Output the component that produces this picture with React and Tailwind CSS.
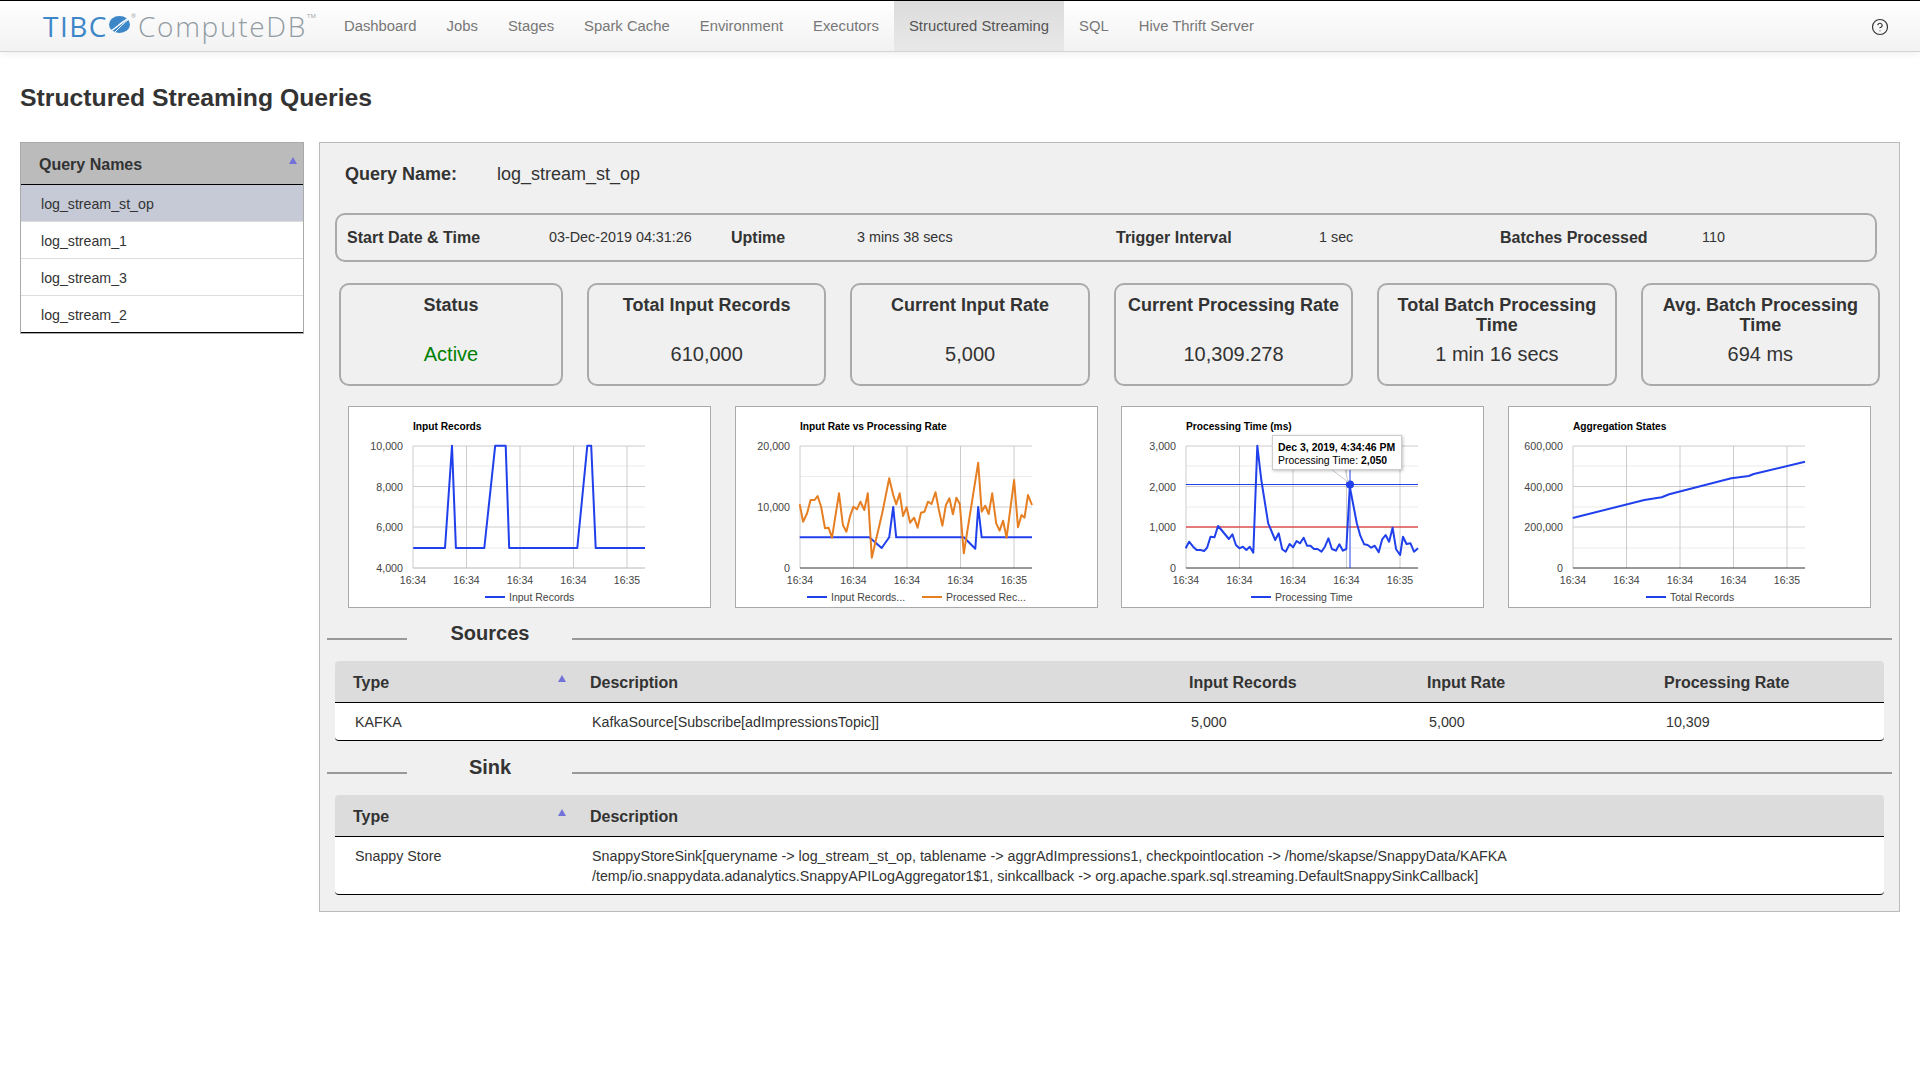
import { CircleHelp } from "lucide-react";

const navItems = ["Dashboard", "Jobs", "Stages", "Spark Cache", "Environment", "Executors", "Structured Streaming", "SQL", "Hive Thrift Server"];
const queries = ["log_stream_st_op", "log_stream_1", "log_stream_3", "log_stream_2"];

const stats = [
  { title: "Status", value: "Active", active: true },
  { title: "Total Input Records", value: "610,000" },
  { title: "Current Input Rate", value: "5,000" },
  { title: "Current Processing Rate", value: "10,309.278" },
  { title: "Total Batch Processing Time", value: "1 min 16 secs" },
  { title: "Avg. Batch Processing Time", value: "694 ms" },
];

// traces are measured off the reference, plot box runs x 65-297, y 40-162
const toPoints = (raw, left) =>
  raw.map(([x, y]) => `${((x - left) / 2.0103).toFixed(1)},${(y / 3 - 16).toFixed(1)}`).join(" ");

const BLUE = "#2040ec";
const ORANGE = "#e67e22";

const charts = [
  {
    title: "Input Records",
    major: [["10,000", 40], ["8,000", 80.5], ["6,000", 121], ["4,000", 162]],
    minor: [60, 101, 142],
    axis: "#b8b8b8",
    lines: [{ color: BLUE, data: toPoints([[168, 474], [232, 474], [246, 167], [254, 474], [311, 474], [333, 167], [354, 167], [361, 474], [498, 474], [518, 167], [526, 167], [535, 474], [634, 474]], 37) }],
    legend: [{ x: 137, label: "Input Records" }],
  },
  {
    title: "Input Rate vs Processing Rate",
    major: [["20,000", 40], ["10,000", 101], ["0", 162]],
    minor: [70.5, 131.5],
    axis: "#333",
    lines: [
      { color: BLUE, data: toPoints([[945, 442], [1085, 442], [1110, 474], [1125, 442], [1133, 351], [1139, 442], [1275, 442], [1298, 476], [1304, 351], [1311, 442], [1412, 442]], 815) },
      { color: ORANGE, data: toPoints([[945, 343], [952, 395], [960, 370], [967, 330], [975, 330], [981, 318], [988, 350], [996, 415], [1003, 413], [1010, 443], [1024, 310], [1032, 405], [1039, 425], [1046, 380], [1053, 350], [1060, 358], [1067, 335], [1075, 360], [1082, 310], [1090, 503], [1111, 370], [1125, 265], [1133, 315], [1139, 343], [1146, 310], [1153, 378], [1160, 352], [1167, 398], [1175, 383], [1182, 413], [1189, 368], [1196, 365], [1203, 335], [1210, 342], [1218, 307], [1225, 360], [1232, 407], [1239, 345], [1246, 325], [1253, 373], [1260, 323], [1267, 342], [1275, 490], [1304, 218], [1311, 365], [1318, 347], [1325, 372], [1332, 310], [1340, 400], [1347, 422], [1354, 392], [1361, 443], [1376, 270], [1384, 412], [1391, 375], [1397, 383], [1404, 315], [1412, 345]], 815) },
    ],
    legend: [
      { x: 72, label: "Input Records..." },
      { x: 187, label: "Processed Rec...", color: ORANGE },
    ],
  },
  {
    title: "Processing Time (ms)",
    major: [["3,000", 40], ["2,000", 80.5], ["1,000", 121], ["0", 162]],
    minor: [60, 101, 142],
    axis: "#333",
    lines: [{ color: BLUE, data: toPoints([[153, 475], [160, 455], [168, 470], [175, 480], [183, 480], [190, 483], [196, 473], [203, 440], [211, 442], [218, 408], [225, 420], [240, 447], [247, 433], [254, 465], [261, 475], [268, 470], [275, 480], [282, 470], [289, 488], [297, 167], [305, 270], [319, 400], [333, 450], [340, 430], [347, 478], [354, 485], [362, 462], [369, 472], [376, 453], [383, 460], [390, 443], [397, 467], [404, 467], [411, 477], [418, 477], [426, 485], [433, 470], [440, 445], [447, 477], [455, 482], [462, 463], [469, 482], [476, 477], [483, 290], [497, 400], [504, 437], [512, 463], [519, 465], [526, 473], [533, 467], [541, 487], [548, 448], [555, 435], [562, 455], [569, 413], [576, 478], [584, 495], [590, 440], [597, 462], [605, 460], [612, 485], [620, 475]], 23) }],
    legend: [{ x: 130, label: "Processing Time" }],
    hover: true,
  },
  {
    title: "Aggregation States",
    major: [["600,000", 40], ["400,000", 80.5], ["200,000", 121], ["0", 162]],
    minor: [60, 101, 142],
    axis: "#333",
    lines: [{ color: BLUE, data: toPoints([[931, 384], [1075, 330], [1110, 322], [1125, 313], [1250, 265], [1285, 258], [1295, 252], [1398, 215]], 801) }],
    legend: [{ x: 138, label: "Total Records" }],
  },
];

const xTicks = [65, 118.5, 172, 225.5, 279];

function Chart({ title, major, minor, axis, lines, legend, hover }) {
  return (
    <div className="relative w-[363px] h-[202px] shrink-0 bg-white border border-[#aaa]">
      <svg width="361" height="200" viewBox="1 1 361 200" className="block">
        <text x="65" y="24" fontSize="10.2" fontWeight="700" fill="#000">{title}</text>
        {minor.map((y) => (
          <line key={y} x1="65" x2="297" y1={y} y2={y} stroke="#ebebeb" />
        ))}
        {xTicks.map((x) => (
          <line key={x} x1={x} x2={x} y1="40" y2="162" stroke="#ccc" />
        ))}
        {major.map(([label, y]) => (
          <g key={label}>
            <line x1="65" x2="297" y1={y} y2={y} stroke={y === 162 ? axis : "#ccc"} />
            <text x="55" y={y + 4} fontSize="10.7" textAnchor="end" fill="#444">{label}</text>
          </g>
        ))}
        {xTicks.map((x) => (
          <text key={x} x={x} y="178" fontSize="10.5" textAnchor="middle" fill="#444">{x === 279 ? "16:35" : "16:34"}</text>
        ))}
        {hover && (
          <g>
            <line x1="65" x2="297" y1="78.5" y2="78.5" stroke={BLUE} />
            <line x1="65" x2="297" y1="121" y2="121" stroke="#e01010" />
            <line x1="229" x2="229" y1="62" y2="162" stroke={BLUE} />
          </g>
        )}
        {lines.map((l) => (
          <polyline key={l.color} points={l.data} fill="none" stroke={l.color} strokeWidth="2" strokeLinejoin="round" />
        ))}
        {hover && (
          <g>
            <circle cx="229" cy="78.5" r="4" fill={BLUE} />
            <polygon points="210,63 224,63 227,76" fill="#fff" stroke="#ccc" />
          </g>
        )}
        {legend.map((item) => (
          <g key={item.label}>
            <line x1={item.x} x2={item.x + 20} y1="191" y2="191" stroke={item.color || BLUE} strokeWidth="2" />
            <text x={item.x + 24} y="195" fontSize="10.5" fill="#444">{item.label}</text>
          </g>
        ))}
      </svg>
      {hover && (
        <div className="absolute left-[150px] top-[28px] w-[130px] h-[35px] pl-[5px] pt-[5px] bg-white border border-[#ccc] shadow-[1px_1px_3px_rgba(0,0,0,0.25)] text-[10.45px] leading-[13px] text-black whitespace-nowrap">
          <div className="font-bold">Dec 3, 2019, 4:34:46 PM</div>
          <div>Processing Time: <span className="font-bold">2,050</span></div>
        </div>
      )}
    </div>
  );
}

function SortArrow({ className }) {
  return (
    <svg width="8" height="7" viewBox="0 0 8 7" className={className}>
      <polygon points="4,0 8,7 0,7" fill="#7272d8" />
    </svg>
  );
}

function SectionTitle({ children, className }) {
  return (
    <div className={`flex items-start ml-[7px] w-[1565px] h-[24px] ${className}`}>
      <div className="w-[80px] h-[2px] mt-[17px] bg-[#999]" />
      <div className="w-[165px] pl-[1px] text-center text-[20px] leading-[24px] font-bold">{children}</div>
      <div className="flex-1 h-[2px] mt-[17px] bg-[#999]" />
    </div>
  );
}

function Logo() {
  return (
    <div className="flex items-start w-[329px] pl-[43px] h-full select-none font-['Open_Sans',sans-serif]">
      <span className="text-[#3d86c8] text-[28px] leading-[50px] tracking-[1.5px]">TIBC</span>
      <svg width="24" height="20" viewBox="0 0 24 20" className="mt-[14px] shrink-0">
        <ellipse cx="11.5" cy="9.5" rx="10.5" ry="8.5" fill="#3d86c8" />
        <path d="M3 16 C 9 12, 14 7, 21 3" stroke="#fff" strokeWidth="1.5" fill="none" />
        <path d="M7 17 C 11 13, 16 8, 21 4" stroke="#fff" strokeWidth="1" fill="none" />
      </svg>
      <span className="text-[#9aa4ab] text-[6px] leading-[6px] mt-[12px] -ml-[1px]">®</span>
      <span className="text-[#929ca3] text-[28px] leading-[50px] ml-[2px] font-light tracking-[1.7px]">ComputeDB</span>
      <span className="text-[#9aa4ab] text-[6px] leading-[6px] mt-[12px]">TM</span>
    </div>
  );
}

export default function App() {
  return (
    <div className="w-[1920px] h-[1080px] bg-white text-[#333] font-['Liberation_Sans',Arial,sans-serif] overflow-hidden">
      <nav className="flex h-[52px] border-t border-black border-b border-b-[#d4d4d4] bg-gradient-to-b from-white to-[#f2f2f2] shadow-[0_1px_8px_rgba(0,0,0,0.08)]">
        <Logo />
        {navItems.map((item) => (
          <a
            key={item}
            className={`px-[15px] text-[14.83px] leading-[50px] ${item === "Structured Streaming" ? "bg-gradient-to-b from-[#dcdcdc] to-[#e8e8e8] text-[#555]" : "text-[#777]"}`}
          >
            {item}
          </a>
        ))}
        <div className="ml-auto pr-[31px] pt-[17px]">
          <CircleHelp size={18} strokeWidth={1.6} color="#333" />
        </div>
      </nav>

      <h1 className="ml-5 mt-[33px] text-[24.75px] leading-[26px] font-bold">Structured Streaming Queries</h1>

      <main className="flex items-start mt-[31px] ml-5">
        <aside className="w-[284px] border border-[#aaa] bg-white">
          <div className="relative h-[42px] pl-[18px] bg-[#bbb] border-b border-black text-[16px] leading-[43px] font-bold">
            Query Names
            <SortArrow className="absolute right-[6px] top-[14px]" />
          </div>
          {queries.map((q, i) => (
            <div
              key={q}
              className={`h-[37px] pl-[20px] text-[14.2px] leading-[38px] border-b ${i === 0 ? "bg-[#c5cad6]" : ""} ${i === queries.length - 1 ? "border-black" : "border-[#ddd]"}`}
            >
              {q}
            </div>
          ))}
        </aside>

        <section className="ml-[15px] w-[1581px] h-[770px] bg-[#f0f0f0] border border-[#bbb]">
          <div className="flex items-center h-[22px] mt-[20px] ml-[25px] text-[18px]">
            <span className="w-[152px] font-bold">Query Name:</span>
            <span>log_stream_st_op</span>
          </div>

          <div className="grid grid-cols-[384px_385px_384px_1fr] items-center ml-[15px] mt-[28px] w-[1542px] h-[49px] pl-[10px] border-2 border-[#aaa] rounded-[10px] text-[14.35px]">
            <div className="flex items-center"><span className="w-[202px] text-[16px] font-bold">Start Date &amp; Time</span>03-Dec-2019 04:31:26</div>
            <div className="flex items-center"><span className="w-[126px] text-[16px] font-bold">Uptime</span>3 mins 38 secs</div>
            <div className="flex items-center"><span className="w-[203px] text-[16px] font-bold">Trigger Interval</span>1 sec</div>
            <div className="flex items-center"><span className="w-[202px] text-[16px] font-bold">Batches Processed</span>110</div>
          </div>

          <div className="flex gap-[24px] ml-[19px] mt-[21px] w-[1541px]">
            {stats.map((s, i) => (
              <div key={s.title} className={`h-[103px] border-2 border-[#aaa] rounded-[10px] text-center px-[10px] pt-[10px] ${i === 0 ? "w-[224px] shrink-0" : "flex-1"}`}>
                <div className="h-[47px] text-[18px] leading-[20px] font-bold">{s.title}</div>
                <div className={`text-[20px] leading-[24px] ${s.active ? "text-[#008000]" : ""}`}>{s.value}</div>
              </div>
            ))}
          </div>

          <div className="flex gap-[23.5px] ml-[28px] mt-[20px]">
            {charts.map((c) => (
              <Chart key={c.title} {...c} />
            ))}
          </div>

          <SectionTitle className="mt-[13px]">Sources</SectionTitle>
          <div className="ml-[15px] mt-[16px] w-[1549px]">
            <div className="grid grid-cols-[237px_599px_238px_237px_238px] h-[42px] bg-[#dcdcdc] border-b border-black rounded-t-[4px] text-[16px] leading-[43px] font-bold">
              <div className="relative pl-[18px]">Type<SortArrow className="absolute left-[223px] top-[14px]" /></div>
              <div className="pl-[18px]">Description</div>
              <div className="pl-[18px]">Input Records</div>
              <div className="pl-[18px]">Input Rate</div>
              <div className="pl-[18px]">Processing Rate</div>
            </div>
            <div className="grid grid-cols-[237px_599px_238px_237px_238px] h-[38px] bg-white border-b border-black rounded-b-[4px] text-[14.27px] leading-[39px]">
              <div className="pl-[20px]">KAFKA</div>
              <div className="pl-[20px]">KafkaSource[Subscribe[adImpressionsTopic]]</div>
              <div className="pl-[20px]">5,000</div>
              <div className="pl-[20px]">5,000</div>
              <div className="pl-[20px]">10,309</div>
            </div>
          </div>

          <SectionTitle className="mt-[14px]">Sink</SectionTitle>
          <div className="ml-[15px] mt-[16px] w-[1549px]">
            <div className="grid grid-cols-[237px_1fr] h-[42px] bg-[#dcdcdc] border-b border-black rounded-t-[4px] text-[16px] leading-[43px] font-bold">
              <div className="relative pl-[18px]">Type<SortArrow className="absolute left-[223px] top-[14px]" /></div>
              <div className="pl-[18px]">Description</div>
            </div>
            <div className="grid grid-cols-[237px_1fr] h-[58px] pt-[9px] bg-white border-b border-black rounded-b-[4px] text-[14.27px] leading-[20px]">
              <div className="pl-[20px]">Snappy Store</div>
              <div className="pl-[20px]">
                SnappyStoreSink[queryname -&gt; log_stream_st_op, tablename -&gt; aggrAdImpressions1, checkpointlocation -&gt; /home/skapse/SnappyData/KAFKA
                <br />
                /temp/io.snappydata.adanalytics.SnappyAPILogAggregator1$1, sinkcallback -&gt; org.apache.spark.sql.streaming.DefaultSnappySinkCallback]
              </div>
            </div>
          </div>
        </section>
      </main>
    </div>
  );
}
